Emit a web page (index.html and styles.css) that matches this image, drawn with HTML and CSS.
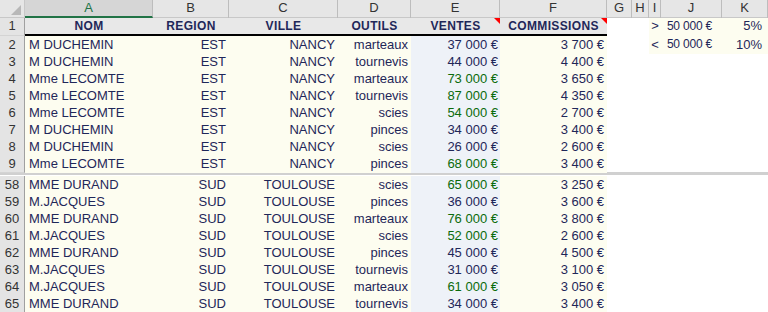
FILE: index.html
```html
<!DOCTYPE html>
<html lang="fr">
<head>
<meta charset="utf-8">
<title>Feuille</title>
<link rel="stylesheet" href="styles.css">
</head>
<body>
<div class="sheet">
  <div class="row colhead">
    <div class="corner"><svg width="10" height="10" viewBox="0 0 10 10"><polygon points="10,0 10,10 0,10" fill="#b8b8b8"/></svg></div>
    <div class="ch sel">A</div><div class="ch">B</div><div class="ch">C</div><div class="ch">D</div><div class="ch">E</div><div class="ch">F</div><div class="ch">G</div><div class="ch">H</div><div class="ch">I</div><div class="ch">J</div><div class="ch">K</div>
  </div>
  <div class="row titles">
    <div class="rn">1</div>
    <div class="t">NOM</div><div class="t">REGION</div><div class="t">VILLE</div><div class="t">OUTILS</div><div class="t mark">VENTES</div><div class="t mark">COMMISSIONS</div>
    <div class="c"></div><div class="c"></div><div class="c ctr y">&gt;</div><div class="c r y pj">50 000 €</div><div class="c r y pk">5%</div>
  </div>
  <div class="row"><div class="rn">2</div><div class="c l y">M DUCHEMIN</div><div class="c r y">EST</div><div class="c r y">NANCY</div><div class="c r y">marteaux</div><div class="c r b">37 000 €</div><div class="c r y">3 700 €</div><div class="c"></div><div class="c"></div><div class="c ctr y">&lt;</div><div class="c r y pj">50 000 €</div><div class="c r y pk">10%</div></div>
  <div class="row"><div class="rn">3</div><div class="c l y">M DUCHEMIN</div><div class="c r y">EST</div><div class="c r y">NANCY</div><div class="c r y">tournevis</div><div class="c r b">44 000 €</div><div class="c r y">4 400 €</div></div>
  <div class="row"><div class="rn">4</div><div class="c l y">Mme LECOMTE</div><div class="c r y">EST</div><div class="c r y">NANCY</div><div class="c r y">marteaux</div><div class="c r b g">73 000 €</div><div class="c r y">3 650 €</div></div>
  <div class="row"><div class="rn">5</div><div class="c l y">Mme LECOMTE</div><div class="c r y">EST</div><div class="c r y">NANCY</div><div class="c r y">tournevis</div><div class="c r b g">87 000 €</div><div class="c r y">4 350 €</div></div>
  <div class="row"><div class="rn">6</div><div class="c l y">Mme LECOMTE</div><div class="c r y">EST</div><div class="c r y">NANCY</div><div class="c r y">scies</div><div class="c r b g">54 000 €</div><div class="c r y">2 700 €</div></div>
  <div class="row"><div class="rn">7</div><div class="c l y">M DUCHEMIN</div><div class="c r y">EST</div><div class="c r y">NANCY</div><div class="c r y">pinces</div><div class="c r b">34 000 €</div><div class="c r y">3 400 €</div></div>
  <div class="row"><div class="rn">8</div><div class="c l y">M DUCHEMIN</div><div class="c r y">EST</div><div class="c r y">NANCY</div><div class="c r y">scies</div><div class="c r b">26 000 €</div><div class="c r y">2 600 €</div></div>
  <div class="row"><div class="rn">9</div><div class="c l y">Mme LECOMTE</div><div class="c r y">EST</div><div class="c r y">NANCY</div><div class="c r y">pinces</div><div class="c r b g">68 000 €</div><div class="c r y">3 400 €</div></div>
  <div class="split"></div>
  <div class="row"><div class="rn">58</div><div class="c l y">MME DURAND</div><div class="c r y">SUD</div><div class="c r y">TOULOUSE</div><div class="c r y">scies</div><div class="c r b g">65 000 €</div><div class="c r y">3 250 €</div></div>
  <div class="row"><div class="rn">59</div><div class="c l y">M.JACQUES</div><div class="c r y">SUD</div><div class="c r y">TOULOUSE</div><div class="c r y">pinces</div><div class="c r b">36 000 €</div><div class="c r y">3 600 €</div></div>
  <div class="row"><div class="rn">60</div><div class="c l y">MME DURAND</div><div class="c r y">SUD</div><div class="c r y">TOULOUSE</div><div class="c r y">marteaux</div><div class="c r b g">76 000 €</div><div class="c r y">3 800 €</div></div>
  <div class="row"><div class="rn">61</div><div class="c l y">M.JACQUES</div><div class="c r y">SUD</div><div class="c r y">TOULOUSE</div><div class="c r y">scies</div><div class="c r b g">52 000 €</div><div class="c r y">2 600 €</div></div>
  <div class="row"><div class="rn">62</div><div class="c l y">MME DURAND</div><div class="c r y">SUD</div><div class="c r y">TOULOUSE</div><div class="c r y">pinces</div><div class="c r b">45 000 €</div><div class="c r y">4 500 €</div></div>
  <div class="row"><div class="rn">63</div><div class="c l y">M.JACQUES</div><div class="c r y">SUD</div><div class="c r y">TOULOUSE</div><div class="c r y">tournevis</div><div class="c r b">31 000 €</div><div class="c r y">3 100 €</div></div>
  <div class="row"><div class="rn">64</div><div class="c l y">M.JACQUES</div><div class="c r y">SUD</div><div class="c r y">TOULOUSE</div><div class="c r y">marteaux</div><div class="c r b g">61 000 €</div><div class="c r y">3 050 €</div></div>
  <div class="row"><div class="rn">65</div><div class="c l y">MME DURAND</div><div class="c r y">SUD</div><div class="c r y">TOULOUSE</div><div class="c r y">tournevis</div><div class="c r b">34 000 €</div><div class="c r y">3 400 €</div></div>
</div>
</body>
</html>
```
FILE: styles.css
```css
* { box-sizing: border-box; margin: 0; padding: 0; }
html, body { background: #ffffff; }
body { margin: 0; font-family: "Liberation Sans", Arial, sans-serif; font-size: 13px; color: #1f2759; overflow: hidden; }
.sheet { width: 768px; height: 312px; overflow: hidden; }
.row {
  display: grid;
  grid-template-columns: 25px 128px 76px 109px 73px 89px 107px 25px 17px 12px 61px 46px;
  height: 17px;
  line-height: 17px;
}
.colhead { height: 18px; line-height: 16px; background: #e6e6e6; border-bottom: 1px solid #c8c8c8; }
.corner { display: flex; align-items: flex-end; justify-content: flex-end; padding: 0 3px 3px 0; border-right: 1px solid #c8c8c8; }
.ch { text-align: center; color: #333333; border-right: 1px solid #bdbdbd; }
.ch.sel { color: #217346; border-bottom: 2px solid #217346; background: #d6d6d6; }
.titles { height: 18px; line-height: 16px; }
.titles .t {
  background: #e8e8e8; font-weight: bold; font-size: 12px; letter-spacing: 0.35px;
  text-align: center; border-bottom: 2px solid #000000; color: #1f2759; position: relative;
}
.titles .mark::after {
  content: ""; position: absolute; top: 0; right: 0;
  border-top: 6px solid #ff0000; border-left: 6px solid transparent;
}
.rn {
  background: #e4e4e4; text-align: center; color: #333333;
  border-right: 1px solid #a0a0a0; border-bottom: 1px solid #d4d4d4;
}
.c { white-space: nowrap; overflow: hidden; }
.l { text-align: left; padding-left: 4px; }
.r { text-align: right; padding-right: 3px; }
.ctr { text-align: center; }
.y { background: #fdfdf0; }
.b { background: #eef2f8; padding-right: 2px; }
.g { color: #0b6b0b; }
.pj { padding-right: 10px; font-size: 12px; letter-spacing: -0.2px; }
.pk { padding-right: 6px; }
.split { height: 4px; background: #d0d0d0; border-bottom: 1px solid #ffffff; }
```
